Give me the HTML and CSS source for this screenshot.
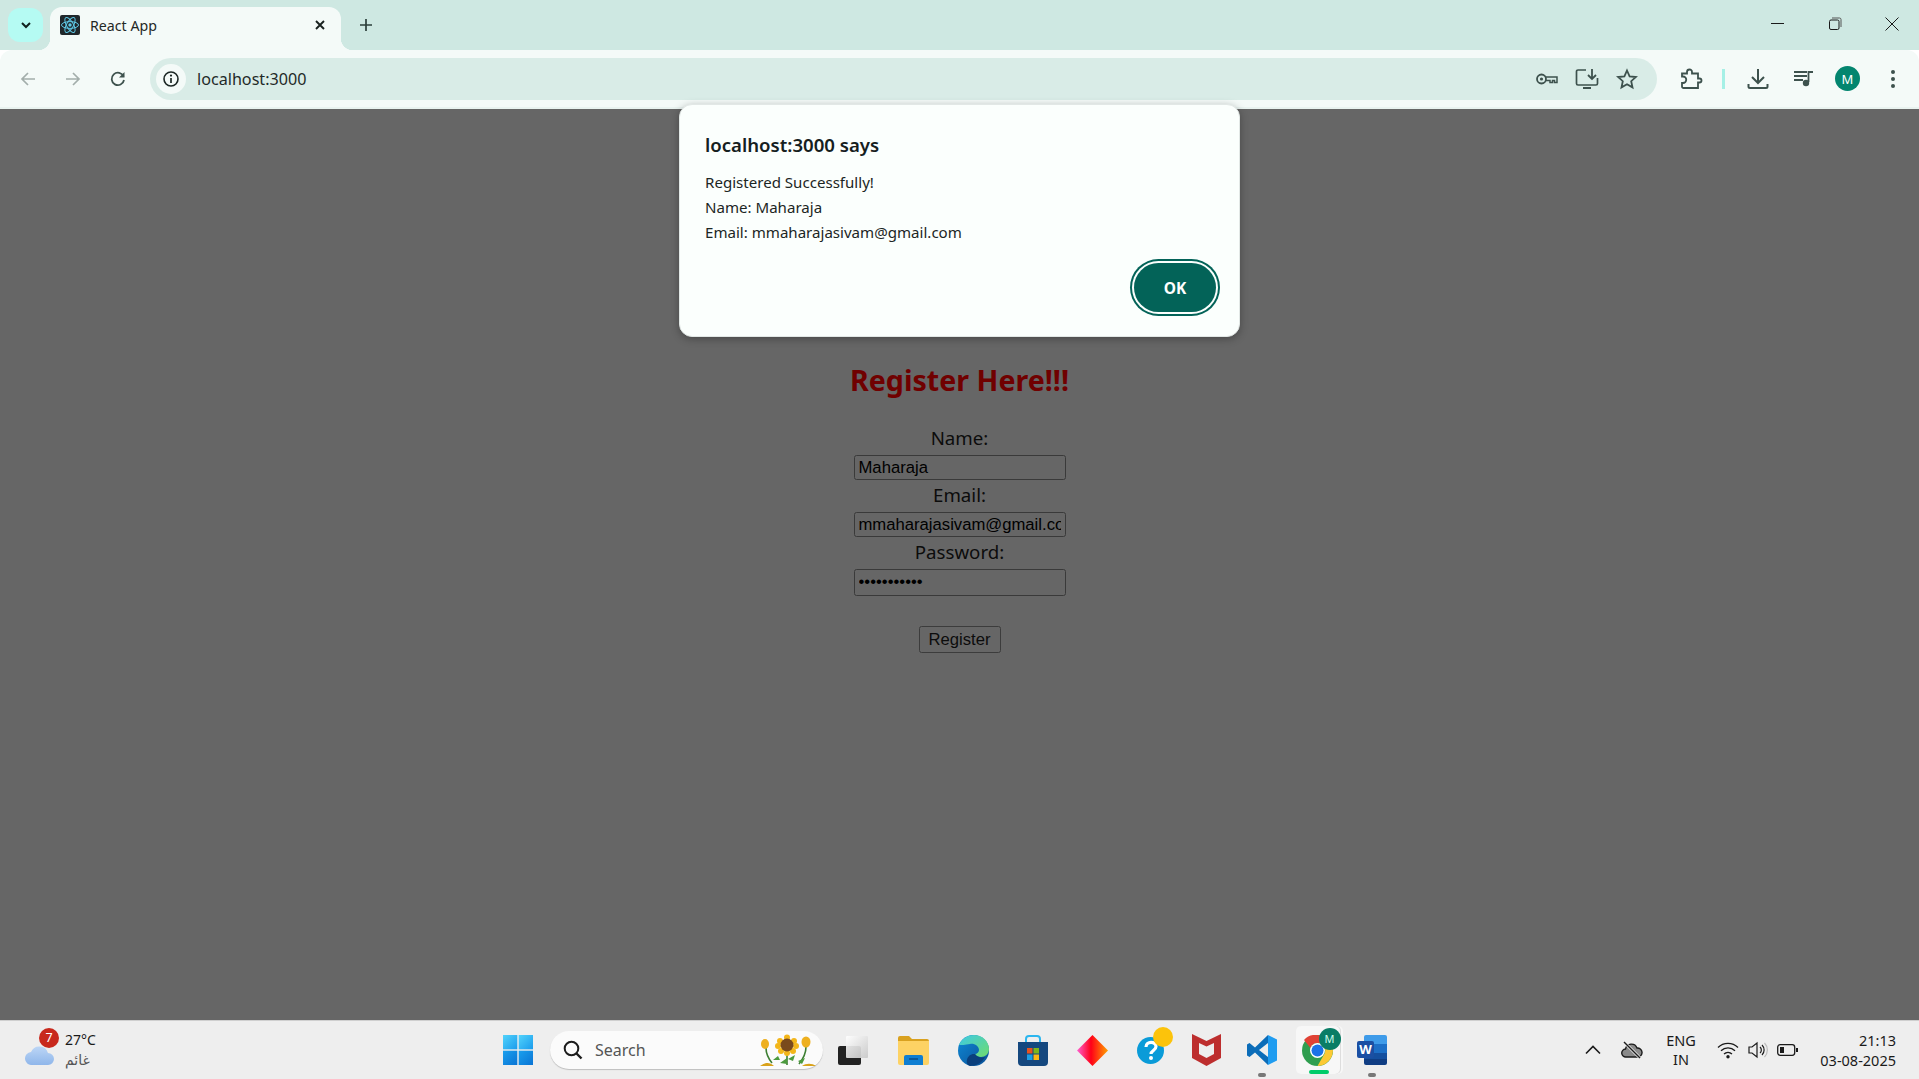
FILE: index.html
```html
<!DOCTYPE html>
<html lang="en">
<head>
<meta charset="utf-8">
<title>React App</title>
<link rel="stylesheet" href="styles.css">
</head>
<body>
<div class="app">
  <header class="tabstrip">
    <button class="tab-search"><svg width="14" height="14" viewBox="0 0 14 14"><path d="M3 5l4 4 4-4" fill="none" stroke="#10211e" stroke-width="2"/></svg></button>
    <div class="tab">
      <svg class="favicon" width="20" height="20" viewBox="0 0 20 20"><rect width="20" height="20" rx="2" fill="#20272b"/><g fill="none" stroke="#5fc9e6" stroke-width="1"><ellipse cx="10" cy="10" rx="8.5" ry="3.4"/><ellipse cx="10" cy="10" rx="8.5" ry="3.4" transform="rotate(60 10 10)"/><ellipse cx="10" cy="10" rx="8.5" ry="3.4" transform="rotate(120 10 10)"/></g><circle cx="10" cy="10" r="1.7" fill="#5fc9e6"/></svg>
      <span class="tab-title">React App</span>
      <svg class="tab-close" width="12" height="12" viewBox="0 0 12 12"><path d="M2 2l8 8M10 2l-8 8" stroke="#18211f" stroke-width="1.9"/></svg>
    </div>
    <button class="new-tab"><svg width="14" height="14" viewBox="0 0 14 14"><path d="M7 1v12M1 7h12" stroke="#2c3f3b" stroke-width="1.7"/></svg></button>
    <div class="win-controls">
      <svg class="win-btn" width="14" height="14" viewBox="0 0 14 14"><path d="M0 6.5h13" stroke="#1a1a1a" stroke-width="1"/></svg>
      <svg class="win-btn" width="14" height="14" viewBox="0 0 14 14"><rect x="1.5" y="3" width="9.500" height="9.500" rx="1.500" fill="none" stroke="#1a1a1a"/><path d="M4 1h7.500a1.500 1.500 0 0 1 1.500 1.500v7.500" fill="none" stroke="#555"/></svg>
      <svg class="win-btn" width="14" height="14" viewBox="0 0 14 14"><path d="M.5.5l13 13M13.500.5l-13 13" stroke="#1a1a1a" stroke-width="1"/></svg>
    </div>
  </header>

  <nav class="toolbar">
    <div class="nav-btns">
      <button class="nav-btn"><svg width="18" height="18" viewBox="0 0 18 18"><path d="M16 9H3M9 3L3 9l6 6" fill="none" stroke="#a3aeab" stroke-width="1.700"/></svg></button>
      <button class="nav-btn"><svg width="18" height="18" viewBox="0 0 18 18"><path d="M2 9h13M9 3l6 6-6 6" fill="none" stroke="#a3aeab" stroke-width="1.700"/></svg></button>
      <button class="nav-btn"><svg width="18" height="18" viewBox="0 0 18 18"><path d="M14.600 6.500A6.200 6.200 0 1 0 15 10" fill="none" stroke="#3d514d" stroke-width="1.800"/><path d="M15.500 2v5.500H10z" fill="#3d514d"/></svg></button>
    </div>
    <div class="omnibox">
      <span class="info-pill"><svg width="18" height="18" viewBox="0 0 18 18"><circle cx="9" cy="9" r="7" fill="none" stroke="#1b2624" stroke-width="1.600"/><path d="M9 8v5" stroke="#1b2624" stroke-width="1.700"/><circle cx="9" cy="5.600" r="1.100" fill="#1b2624"/></svg></span>
      <span class="url">localhost:3000</span>
      <span class="bar-icons">
        <svg class="bar-icon" width="24" height="24" viewBox="0 0 24 24"><circle cx="6.500" cy="12" r="4.500" fill="none" stroke="#3d514d" stroke-width="1.800"/><circle cx="6.500" cy="12" r="1.600" fill="#3d514d"/><path d="M11 10h11v5.500h-2.500v-2h-2v2H15v-2h-4" fill="none" stroke="#3d514d" stroke-width="1.500"/></svg>
        <svg class="bar-icon" width="24" height="24" viewBox="0 0 24 24"><path d="M11 3H3a1.500 1.500 0 0 0-1.500 1.500v12A1.500 1.500 0 0 0 3 18h18a1.500 1.500 0 0 0 1.500-1.500V11" fill="none" stroke="#3d514d" stroke-width="1.700"/><path d="M8 20h8v2H8z" fill="#3d514d"/><path d="M17 2v9M13 8l4 4 4-4" fill="none" stroke="#3d514d" stroke-width="1.800"/></svg>
        <svg class="bar-icon" width="24" height="24" viewBox="0 0 24 24"><path d="M12 3.500l2.600 5.800 6.300.7-4.700 4.200 1.300 6.200-5.500-3.200-5.500 3.200 1.300-6.200L3.100 10l6.300-.7z" fill="none" stroke="#3d514d" stroke-width="1.800"/></svg>
      </span>
    </div>
    <div class="tools">
      <span class="tool tool-ext"><svg width="24" height="24" viewBox="0 0 24 24"><path d="M3 6.500h5V5a2.500 2.500 0 0 1 5 0v1.500h6v5h1.500a2 2 0 0 1 0 4H19V21H4.500A1.500 1.500 0 0 1 3 19.500V16h1a3 3 0 0 0 0-6.500H3z" fill="none" stroke="#3d514d" stroke-width="1.800"/></svg></span>
      <span class="tool-sep"></span>
      <span class="tool tool-wide"><svg width="24" height="24" viewBox="0 0 24 24"><path d="M12 2v13M6 10l6 6 6-6" fill="none" stroke="#3d514d" stroke-width="2"/><path d="M2.500 17v2.500A1.500 1.500 0 0 0 4 21h16a1.500 1.500 0 0 0 1.500-1.500V17" fill="none" stroke="#3d514d" stroke-width="2"/></svg></span>
      <span class="tool tool-wide"><svg width="22" height="22" viewBox="0 0 22 22"><path d="M1 4h13M1 8h13M1 12h9" stroke="#3d514d" stroke-width="1.800"/><path d="M15.500 4H20M15.500 3v11" stroke="#3d514d" stroke-width="1.800"/><circle cx="13" cy="15" r="3.200" fill="#3d514d"/></svg></span>
      <span class="tool tool-avatar"><span class="avatar">M</span></span>
      <span class="tool tool-dots"><svg width="6" height="20" viewBox="0 0 6 20"><circle cx="3" cy="3" r="2" fill="#3d514d"/><circle cx="3" cy="10" r="2" fill="#3d514d"/><circle cx="3" cy="17" r="2" fill="#3d514d"/></svg></span>
    </div>
  </nav>

  <main class="page">
    <h1 class="heading">Register Here!!!</h1>
    <form class="form">
      <label class="label">Name:</label>
      <input class="field" type="text" value="Maharaja">
      <label class="label">Email:</label>
      <input class="field" type="text" value="mmaharajasivam@gmail.com">
      <label class="label">Password:</label>
      <input class="field field-pass" type="password" value="maharaja123">
      <button class="submit" type="button">Register</button>
    </form>
  </main>

  <div class="dialog">
    <div class="dialog-title">localhost:3000 says</div>
    <div class="dialog-body">
      <div>Registered Successfully!</div>
      <div>Name: Maharaja</div>
      <div>Email: mmaharajasivam@gmail.com</div>
    </div>
    <div class="dialog-actions"><button class="ok">OK</button></div>
  </div>

  <footer class="taskbar">
    <div class="weather">
      <span class="weather-icon">
        <svg width="30" height="20" viewBox="0 0 30 20"><defs><linearGradient id="cl" x1="0" y1="0" x2="0" y2="1"><stop offset="0" stop-color="#bcd6f6"/><stop offset="1" stop-color="#8fb6ea"/></linearGradient></defs><path d="M7 20a6.500 6.500 0 0 1-1-13 9 9 0 0 1 17 1 6 6 0 0 1 0 12z" fill="url(#cl)"/></svg>
        <span class="badge">7</span>
      </span>
      <span class="weather-text"><span class="temp">27°C</span><span class="cond" lang="ar" dir="rtl">غائم</span></span>
    </div>
    <div class="task-center">
      <svg class="start" width="30" height="30" viewBox="0 0 30 30"><defs><linearGradient id="w1" x1="0" y1="0" x2="1" y2="1"><stop offset="0" stop-color="#52d3fb"/><stop offset="1" stop-color="#1a9bec"/></linearGradient><linearGradient id="w2" x1="0" y1="0" x2="1" y2="1"><stop offset="0" stop-color="#1ba0ee"/><stop offset="1" stop-color="#0a74d4"/></linearGradient></defs><rect x="0" y="0" width="14.300" height="14.300" fill="url(#w1)"/><rect x="15.700" y="0" width="14.300" height="14.300" fill="url(#w1)"/><rect x="0" y="15.700" width="14.300" height="14.300" fill="url(#w2)"/><rect x="15.700" y="15.700" width="14.300" height="14.300" fill="url(#w2)"/></svg>
      <div class="search">
        <svg width="22" height="22" viewBox="0 0 22 22"><circle cx="9.500" cy="9.500" r="6.800" fill="none" stroke="#1c1c1c" stroke-width="2"/><path d="M14.500 14.500l5 5" stroke="#1c1c1c" stroke-width="2.400"/></svg>
        <span class="search-text">Search</span>
        <svg class="flowers" width="56" height="34" viewBox="0 0 56 34"><g stroke="#3d7f33" stroke-width="1.600" fill="none"><path d="M6 15c0 6 2 10 6 15M27 18v14M46 14c0 7-3 12-7 17"/></g><path d="M13 27l5-4 2 4zM28 26l7-4-2 6zM20 30l7-5v6zM38 28l7-3-3 6z" fill="#4c9a3e"/><path d="M0 33c5-4 10-4 14 0zM42 33c4-3 10-3 14 0z" fill="#d9a21b"/><g fill="#f3b61a"><circle cx="27" cy="4.500" r="3"/><circle cx="20" cy="8" r="3"/><circle cx="34" cy="8" r="3"/><circle cx="18" cy="13" r="3"/><circle cx="36" cy="13" r="3"/><circle cx="21" cy="18" r="3"/><circle cx="33" cy="18" r="3"/><circle cx="27" cy="20" r="3"/></g><circle cx="27" cy="12" r="6.500" fill="#7a4a1c"/><ellipse cx="5" cy="11" rx="4" ry="5" fill="#eeb01f"/><ellipse cx="46" cy="9" rx="4.500" ry="5.500" fill="#eeb01f"/></svg>
      </div>
      <span class="task w-taskview"><svg width="30" height="29" viewBox="0 0 30 29"><defs><linearGradient id="tv" x1="0" y1="0" x2="1" y2="1"><stop offset="0" stop-color="#fff"/><stop offset="1" stop-color="#c8c8c8"/></linearGradient></defs><rect x="0" y="10" width="23" height="19" rx="2" fill="#222"/><rect x="8" y="0" width="22" height="22" rx="1" fill="url(#tv)" opacity=".92"/></svg></span>
      <span class="task w60"><svg width="31" height="30" viewBox="0 0 31 30"><path d="M0 3a2 2 0 0 1 2-2h9l3 3h15a2 2 0 0 1 2 2v4H0z" fill="#d9a11f"/><path d="M0 6h31v22a2 2 0 0 1-2 2H2a2 2 0 0 1-2-2z" fill="#fdd264"/><path d="M6 22a2 2 0 0 1 2-2h15a2 2 0 0 1 2 2v8H6z" fill="#0f7ed2"/><path d="M11 24h9" stroke="#0a4e8a" stroke-width="1.500"/></svg></span>
      <span class="task w60"><svg width="31" height="31" viewBox="0 0 31 31"><defs><linearGradient id="e1" x1="0" y1="0" x2="1" y2="1"><stop offset="0" stop-color="#3dc9e6"/><stop offset="1" stop-color="#6fdc6d"/></linearGradient><linearGradient id="e2" x1="0" y1="0" x2="1" y2="1"><stop offset="0" stop-color="#0f8ad6"/><stop offset="1" stop-color="#0a4f96"/></linearGradient></defs><circle cx="15.500" cy="15.500" r="15.500" fill="url(#e2)"/><path d="M1 10C4 3 10 0 16 0c8 0 15 6 15 14 0 5-4 8-8 8-3 0-5-1-6-3 2 0 4-2 4-4 0-4-5-7-9-6-5 1-9 1-11 1z" fill="url(#e1)"/><path d="M12 31C6 29 9 18 17 19c2 3 6 4 10 3-3 6-9 9-15 9z" fill="#0a3f7c"/></svg></span>
      <span class="task w60"><svg width="30" height="31" viewBox="0 0 30 31"><path d="M8 8V4a3 3 0 0 1 3-3h8a3 3 0 0 1 3 3v4" fill="none" stroke="#2bb6ef" stroke-width="2"/><path d="M0 7h30v20a4 4 0 0 1-4 4H4a4 4 0 0 1-4-4z" fill="#15487f"/><rect x="9" y="13" width="5.500" height="5.500" fill="#e8531f"/><rect x="15.500" y="13" width="5.500" height="5.500" fill="#7cb51c"/><rect x="9" y="19.500" width="5.500" height="5.500" fill="#1a9fe6"/><rect x="15.500" y="19.500" width="5.500" height="5.500" fill="#fcb713"/></svg></span>
      <span class="task w58"><svg width="31" height="31" viewBox="0 0 31 31"><defs><linearGradient id="d1" x1="0" y1="0" x2="1" y2="0"><stop offset="0" stop-color="#ff5fd0"/><stop offset=".45" stop-color="#ff0018"/><stop offset="1" stop-color="#ffa000"/></linearGradient></defs><path d="M15.500 0L31 15.500 15.500 31 0 15.500z" fill="url(#d1)"/></svg></span>
      <span class="task w58 help"><svg width="27" height="30" viewBox="0 0 27 30"><circle cx="13.500" cy="16.500" r="13.500" fill="#0a9bd8"/><path d="M9 13c0-6 10-6 10-.5 0 4-5 4-5 7.500" fill="none" stroke="#fff" stroke-width="3.200"/><circle cx="14" cy="24" r="2" fill="#fff"/></svg><span class="dot-yellow"></span></span>
      <span class="task w55"><svg width="29" height="32" viewBox="0 0 29 32"><path d="M0 0l14.500 7L29 0v24l-14.500 8L0 24z" fill="#bd2e2e"/><path d="M7 9l7.500 3.500L22 9v11l-7.500 4L7 20z" fill="#eee"/></svg></span>
      <span class="task w55"><svg width="30" height="30" viewBox="0 0 30 30"><path d="M21 0L8 12.500 2.500 8 0 9.500v11L2.500 22 8 17.500 21 30z" fill="#0b6cb8"/><path d="M21 8v14l-9-7z" fill="#eee"/><path d="M21 0l9 4.500v21L21 30z" fill="#1f9cf0"/></svg><i class="pip"></i></span>
      <span class="task w55 chrome">
        <span class="chrome-tile"><svg width="31" height="31" viewBox="0 0 31 31"><circle cx="15.500" cy="15.500" r="15.500" fill="#2f9e4f"/><path d="M15.500 0A15.500 15.500 0 0 1 29 8H15.500a7.500 7.500 0 0 0-7 5L2 5A15.500 15.500 0 0 1 15.500 0z" fill="#e04235"/><path d="M29 8a15.500 15.500 0 0 1-13.500 23l6.500-11.500A7.500 7.500 0 0 0 21 10z" fill="#fcc934"/><circle cx="15.500" cy="15.500" r="7.500" fill="#fff"/><circle cx="15.500" cy="15.500" r="6" fill="#1a73e8"/></svg><span class="chrome-badge">M</span></span>
        <i class="active-bar"></i>
      </span>
      <span class="task w55"><svg width="30" height="30" viewBox="0 0 30 30"><path d="M9 0h19a2 2 0 0 1 2 2v7H7V2a2 2 0 0 1 2-2z" fill="#3e9be9"/><rect x="7" y="9" width="23" height="9" fill="#1c6fc7"/><rect x="7" y="18" width="23" height="6" fill="#144f9f"/><path d="M7 24h23v4a2 2 0 0 1-2 2H9a2 2 0 0 1-2-2z" fill="#103d83"/><rect x="0" y="6" width="17" height="17" rx="2" fill="#1a4fa3"/><text class="word-w" x="8.500" y="19" text-anchor="middle">W</text></svg><i class="pip"></i></span>
    </div>
    <div class="tray">
      <svg class="tray-chevron" width="16" height="10" viewBox="0 0 16 10"><path d="M1 8.500l7-7 7 7" fill="none" stroke="#1b1b1b" stroke-width="1.600"/></svg>
      <svg class="tray-cloud" width="22" height="20" viewBox="0 0 22 20"><path d="M5 17a4 4 0 0 1-.5-8 6 6 0 0 1 11.500-1 4.500 4.500 0 0 1 1 9z" fill="#8a8a8a" stroke="#1b1b1b" stroke-width="1.400"/><path d="M3 2l16 16" stroke="#eee" stroke-width="3"/><path d="M3 2l16 16" stroke="#1b1b1b" stroke-width="1.400"/></svg>
      <span class="lang"><span>ENG</span><span>IN</span></span>
      <svg class="tray-wifi" width="22" height="18" viewBox="0 0 22 18"><g fill="none" stroke="#1b1b1b" stroke-width="1.300"><path d="M1 6.500a14 14 0 0 1 20 0"/><path d="M4 9.800a10 10 0 0 1 14 0"/><path d="M7 13a6 6 0 0 1 8 0"/></g><circle cx="11" cy="15.800" r="1.700" fill="#1b1b1b"/></svg>
      <svg class="tray-vol" width="20" height="18" viewBox="0 0 20 18"><path d="M1 6h3l5-4v14l-5-4H1z" fill="none" stroke="#1b1b1b" stroke-width="1.200"/><path d="M12 6a4 4 0 0 1 0 6M14 4a7 7 0 0 1 0 10" fill="none" stroke="#1b1b1b" stroke-width="1.200"/><path d="M16.500 2a10 10 0 0 1 0 14" fill="none" stroke="#bbb" stroke-width="1.200"/></svg>
      <svg class="tray-bat" width="21" height="14" viewBox="0 0 21 14"><rect x=".7" y="1.700" width="17" height="10.600" rx="2.500" fill="none" stroke="#1b1b1b" stroke-width="1.300"/><rect x="3" y="4" width="4" height="6" fill="#1b1b1b"/><path d="M19 5h2v4h-2z" fill="#1b1b1b"/></svg>
      <span class="clock"><span>21:13</span><span>03-08-2025</span></span>
    </div>
  </footer>
</div>
</body>
</html>
```
FILE: styles.css
```css
* { box-sizing: border-box; }
html, body { margin: 0; height: 100%; overflow: hidden; }
body { font-family: "Noto Sans", sans-serif; color: #111; }
button { border: 0; background: none; padding: 0; font: inherit; color: inherit; }

.app { position: relative; display: flex; flex-direction: column; height: 1079px; width: 1919px; }

/* tab strip */
.tabstrip { display: flex; height: 50px; flex: none; background: #cee8e2; padding-left: 8px; }
.tab-search { width: 35px; height: 34px; margin-top: 8px; border-radius: 12px; background: #b5fbf3; display: flex; align-items: center; justify-content: center; }
.tab { position: relative; width: 291px; height: 43px; margin: 7px 0 0 7px; background: #f4faf8; border-radius: 12px 12px 0 0; display: flex; align-items: center; padding: 0 15px 7px 10px; }
.tab::before, .tab::after { content: ""; position: absolute; bottom: 0; width: 12px; height: 12px; }
.tab::before { left: -12px; background: radial-gradient(circle at 0 0, transparent 12px, #f4faf8 12.500px); }
.tab::after { right: -12px; background: radial-gradient(circle at 100% 0, transparent 12px, #f4faf8 12.500px); }
.favicon { flex: none; }
.tab-title { flex: 1; margin-left: 10px; font-size: 14.200px; color: #1f2826; white-space: nowrap; }
.tab-close { flex: none; }
.new-tab { width: 34px; height: 34px; margin: 8px 0 0 8px; display: flex; align-items: center; justify-content: center; }
.win-controls { margin-left: auto; display: flex; align-items: center; height: 48px; padding-right: 20px; gap: 43px; }
.win-btn { flex: none; }

/* toolbar */
.toolbar { display: flex; align-items: center; height: 59px; flex: none; background: #f4faf8; border-radius: 12px 12px 0 0; border-bottom: 2px solid #e9f3f0; }
.nav-btns { display: flex; padding-left: 5px; width: 150px; flex: none; }
.nav-btn { width: 45px; height: 36px; display: flex; align-items: center; justify-content: center; }
.omnibox { flex: 1; height: 42px; background: #d9ece7; border-radius: 21px; display: flex; align-items: center; padding: 0 10px 0 6px; }
.info-pill { width: 30px; height: 30px; border-radius: 50%; background: #f4faf8; display: flex; align-items: center; justify-content: center; flex: none; }
.url { margin-left: 11px; font-size: 16.150px; color: #1f2a28; flex: 1; }
.bar-icons { display: flex; flex: none; }
.bar-icon { width: 40px; }
.tools { display: flex; align-items: center; width: 262px; flex: none; padding-left: 13px; }
.tool { display: flex; align-items: center; justify-content: center; flex: none; }
.tool-ext { width: 42px; }
.tool-sep { width: 2.500px; height: 20px; background: #a5f0e6; margin: 0 10px; flex: none; }
.tool-wide { width: 46px; }
.tool-avatar { width: 42px; }
.tool-dots { width: 48px; }
.avatar { width: 25px; height: 25px; border-radius: 50%; background: #03856f; color: #fff; font-size: 13px; display: flex; align-items: center; justify-content: center; }

/* page */
.page { flex: 1; background: #666; display: flex; flex-direction: column; align-items: center; padding-top: 251px; }
.heading { margin: 0; font-size: 28.600px; line-height: 40px; font-weight: 700; color: #700000; }
.form { display: flex; flex-direction: column; align-items: center; margin-top: 23px; }
.label { font-size: 18.700px; line-height: 29px; height: 32px; color: #0c0c0c; }
.field { width: 212px; height: 25px; border: 1.250px solid #3a3a3a; border-radius: 2.500px; background: #666; padding: 0 4px; font: 16.670px "Liberation Sans", sans-serif; color: #000; outline: 0; }
.field-pass { height: 27px; padding-bottom: 2px; }
.submit { width: 82px; height: 27px; margin-top: 30px; border: 1.250px solid #3c3c3c; border-radius: 2.500px; background: #666; font: 16.670px "Liberation Sans", sans-serif; color: #0c0c0c; }

/* dialog */
.dialog { position: absolute; top: 104px; left: 679px; width: 561px; height: 233px; background: #fbfffd; border: 1px solid #e2e8e6; border-radius: 13px; box-shadow: 0 2px 8px rgba(0,0,0,.3); padding: 22px 23px 24px 25px; display: flex; flex-direction: column; }
.dialog-title { font-size: 18.600px; line-height: 36px; font-weight: 600; color: #15201e; }
.dialog-body { font-size: 15.080px; line-height: 25px; color: #1c2624; margin-top: 7px; }
.dialog-actions { margin-top: auto; display: flex; justify-content: flex-end; }
.ok { width: 82px; height: 49px; border-radius: 25px; background: #036358; color: #fff; font-size: 15.500px; font-weight: 700; box-shadow: 0 0 0 2px #fbfffd, 0 0 0 4px #036358; }

/* taskbar */
.taskbar { height: 59px; flex: none; background: #eee; border-top: 1px solid #cfcfcf; display: flex; align-items: center; }
.weather { display: flex; width: 503px; flex: none; padding-left: 25px; align-items: center; }
.weather-icon { position: relative; width: 40px; height: 36px; flex: none; margin-top: -6px; display: flex; align-items: flex-end; }
.badge { position: absolute; left: 14px; top: -1px; width: 20px; height: 20px; border-radius: 50%; background: #c8281c; color: #fff; font-size: 12.500px; line-height: 20px; text-align: center; }
.weather-text { display: flex; flex-direction: column; font-size: 14px; line-height: 21px; }
.temp { color: #1a1a1a; }
.cond { color: #555; font-family: "DejaVu Sans", sans-serif; font-size: 14px; text-align: left; }
.task-center { display: flex; align-items: center; flex: none; height: 100%; }
.start { flex: none; }
.search { width: 273px; height: 38px; margin-left: 17px; border-radius: 19px; background: #fbfbfb; box-shadow: 0 1px 1px rgba(0,0,0,.2); display: flex; align-items: center; padding: 0 7px 0 12px; flex: none; }
.search-text { margin-left: 11px; flex: 1; font-size: 16px; color: #555; }
.flowers { flex: none; }
.task { position: relative; display: flex; align-items: center; justify-content: center; flex: none; height: 100%; }
.w-taskview { width: 60px; }
.w60 { width: 60px; }
.w58 { width: 58px; }
.w55 { width: 55px; }
.help svg { margin-top: -3px; }
.dot-yellow { position: absolute; left: 32px; top: 6px; width: 20px; height: 20px; border-radius: 50%; background: #fcc30b; }
.pip { position: absolute; bottom: 2px; left: 50%; margin-left: -4px; width: 8px; height: 4px; border-radius: 2px; background: #777; }
.chrome-tile { width: 44px; height: 48px; border-radius: 5px; background: #f7f7f7; box-shadow: 1px 0 0 #ddd, 3px 0 0 #f7f7f7; display: flex; align-items: center; justify-content: center; position: relative; margin-left: 2px; }
.chrome-badge { position: absolute; left: 23px; top: 2px; width: 22px; height: 22px; border-radius: 50%; background: #0a7d66; color: #cfe; font-size: 11px; line-height: 22px; text-align: center; }
.active-bar { position: absolute; bottom: 5px; left: 50%; margin-left: -8px; width: 20px; height: 4px; border-radius: 2px; background: #00cc6a; }
.word-w { font: 700 13px "Noto Sans", sans-serif; fill: #fff; }
.tray { position: relative; flex: 1; display: flex; align-items: center; height: 100%; }
.tray-chevron { margin-left: 186px; flex: none; }
.tray-cloud { margin-left: 20px; flex: none; }
.lang { margin-left: 14px; width: 48px; display: flex; flex-direction: column; align-items: center; font-size: 14.500px; line-height: 19px; color: #1a1a1a; flex: none; }
.tray-wifi { margin-left: 12px; flex: none; }
.tray-vol { margin-left: 9px; flex: none; }
.tray-bat { margin-left: 9px; flex: none; }
.clock { margin-left: auto; margin-right: 23px; display: flex; flex-direction: column; align-items: flex-end; font-size: 14.500px; line-height: 20px; color: #1a1a1a; }
```
